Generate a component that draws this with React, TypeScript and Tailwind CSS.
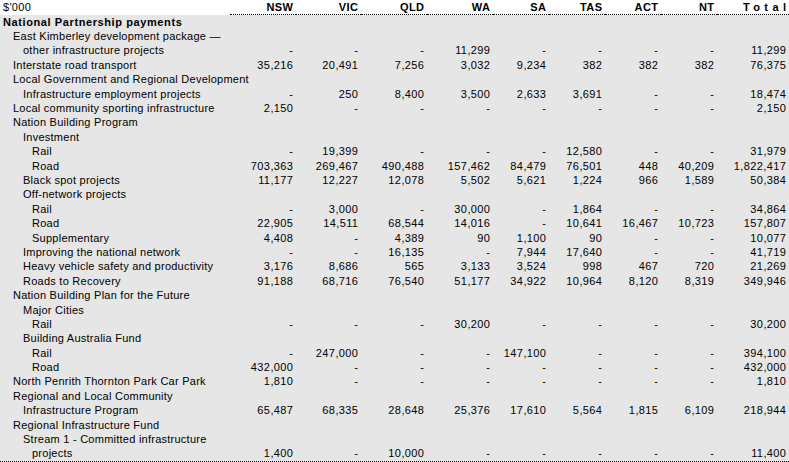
import React from "react";

type Row = { label: string; level: number; bold?: boolean; values?: string[] };

const D = "-";

const rows: Row[] = [
  { label: "National Partnership payments", level: 0, bold: true },
  { label: "East Kimberley development package \u2014", level: 1 },
  { label: "other infrastructure projects", level: 2, values: [D, D, D, "11,299", D, D, D, D, "11,299"] },
  { label: "Interstate road transport", level: 1, values: ["35,216", "20,491", "7,256", "3,032", "9,234", "382", "382", "382", "76,375"] },
  { label: "Local Government and Regional Development", level: 1 },
  { label: "Infrastructure employment projects", level: 2, values: [D, "250", "8,400", "3,500", "2,633", "3,691", D, D, "18,474"] },
  { label: "Local community sporting infrastructure", level: 1, values: ["2,150", D, D, D, D, D, D, D, "2,150"] },
  { label: "Nation Building Program", level: 1 },
  { label: "Investment", level: 2 },
  { label: "Rail", level: 3, values: [D, "19,399", D, D, D, "12,580", D, D, "31,979"] },
  { label: "Road", level: 3, values: ["703,363", "269,467", "490,488", "157,462", "84,479", "76,501", "448", "40,209", "1,822,417"] },
  { label: "Black spot projects", level: 2, values: ["11,177", "12,227", "12,078", "5,502", "5,621", "1,224", "966", "1,589", "50,384"] },
  { label: "Off-network projects", level: 2 },
  { label: "Rail", level: 3, values: [D, "3,000", D, "30,000", D, "1,864", D, D, "34,864"] },
  { label: "Road", level: 3, values: ["22,905", "14,511", "68,544", "14,016", D, "10,641", "16,467", "10,723", "157,807"] },
  { label: "Supplementary", level: 3, values: ["4,408", D, "4,389", "90", "1,100", "90", D, D, "10,077"] },
  { label: "Improving the national network", level: 2, values: [D, D, "16,135", D, "7,944", "17,640", D, D, "41,719"] },
  { label: "Heavy vehicle safety and productivity", level: 2, values: ["3,176", "8,686", "565", "3,133", "3,524", "998", "467", "720", "21,269"] },
  { label: "Roads to Recovery", level: 2, values: ["91,188", "68,716", "76,540", "51,177", "34,922", "10,964", "8,120", "8,319", "349,946"] },
  { label: "Nation Building Plan for the Future", level: 1 },
  { label: "Major Cities", level: 2 },
  { label: "Rail", level: 3, values: [D, D, D, "30,200", D, D, D, D, "30,200"] },
  { label: "Building Australia Fund", level: 2 },
  { label: "Rail", level: 3, values: [D, "247,000", D, D, "147,100", D, D, D, "394,100"] },
  { label: "Road", level: 3, values: ["432,000", D, D, D, D, D, D, D, "432,000"] },
  { label: "North Penrith Thornton Park Car Park", level: 1, values: ["1,810", D, D, D, D, D, D, D, "1,810"] },
  { label: "Regional and Local Community", level: 1 },
  { label: "Infrastructure Program", level: 2, values: ["65,487", "68,335", "28,648", "25,376", "17,610", "5,564", "1,815", "6,109", "218,944"] },
  { label: "Regional Infrastructure Fund", level: 1 },
  { label: "Stream 1 - Committed infrastructure", level: 2 },
  { label: "projects", level: 3, values: ["1,400", D, "10,000", D, D, D, D, D, "11,400"] },
];

const headers = ["NSW", "VIC", "QLD", "WA", "SA", "TAS", "ACT", "NT"];

const grid = "grid grid-cols-[230px_66px_65px_66px_66px_56px_56px_56px_56px_72px]";

const indent = ["pl-[3px]", "pl-[13px]", "pl-[23px]", "pl-[32px]"];

export default function App() {
  return (
    <div
      className="w-[789px] h-[462px] overflow-hidden bg-white text-black text-[11px] leading-none"
      style={{ fontFamily: '"Liberation Sans", Arial, sans-serif' }}
    >
      <div className={`${grid} h-[15px] bg-white`}>
        <div className="pl-[3px] h-[15px] flex items-center pb-[1px] tracking-[0.3px]">$'000</div>
        {headers.map((h) => (
          <div
            key={h}
            className="h-[15px] border-b border-dotted border-black flex items-center justify-end pr-[3px] font-bold tracking-[0.4px]"
          >
            <span className="mr-[-0.4px]">{h}</span>
          </div>
        ))}
        <div className="h-[15px] border-b border-dotted border-black flex items-center justify-end pr-[3px] font-bold tracking-[4.4px]">
          <span className="mr-[-4.4px]">Total</span>
        </div>
      </div>
      <div className="bg-[#e6e6e6] border-b border-dotted border-black">
        {rows.map((r, i) => (
          <div key={i} className={`${grid} h-[14.4px] items-center`}>
            <div
              className={`${indent[r.level]} whitespace-nowrap ${
                r.bold ? "font-bold tracking-[0.6px]" : "tracking-[0.25px]"
              }`}
            >
              {r.label}
            </div>
            {(r.values ?? Array(9).fill("")).map((v, j) => (
              <div key={j} className="text-right pr-[3px] tracking-[0.4px] whitespace-nowrap">
                <span className="mr-[-0.4px]">{v}</span>
              </div>
            ))}
          </div>
        ))}
      </div>
    </div>
  );
}
